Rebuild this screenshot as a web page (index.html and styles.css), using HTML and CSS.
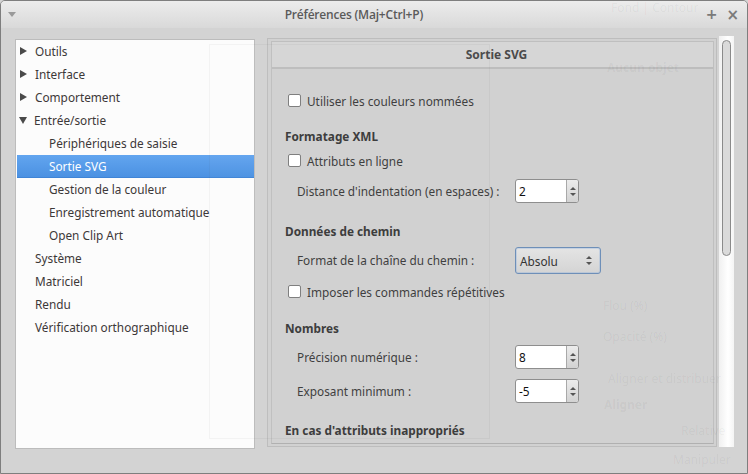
FILE: index.html
```html
<!DOCTYPE html>
<html lang="fr">
<head>
<meta charset="utf-8">
<title>Préférences</title>
<link rel="stylesheet" href="styles.css">
</head>
<body>
<div class="window">
  <div class="titlebar">
    <span class="tb-menu"></span>
    <span class="tb-title">Préférences (Maj+Ctrl+P)</span>
    <span class="tb-btns"><span class="tb-plus">+</span><span class="tb-close">×</span></span>
  </div>
  <div class="main">
    <div class="tree">
      <div class="item top"><span class="arr right"></span>Outils</div>
      <div class="item top"><span class="arr right"></span>Interface</div>
      <div class="item top"><span class="arr right"></span>Comportement</div>
      <div class="item top"><span class="arr down"></span>Entrée/sortie</div>
      <div class="item child">Périphériques de saisie</div>
      <div class="item child sel">Sortie SVG</div>
      <div class="item child">Gestion de la couleur</div>
      <div class="item child">Enregistrement automatique</div>
      <div class="item child">Open Clip Art</div>
      <div class="item top">Système</div>
      <div class="item top">Matriciel</div>
      <div class="item top">Rendu</div>
      <div class="item top">Vérification orthographique</div>
    </div>
    <div class="pane">
      <div class="frame">
        <div class="frame-head">Sortie SVG</div>
        <div class="content">
          <div class="row r-cb1"><span class="cb"></span>Utiliser les couleurs nommées</div>
          <div class="row head r-xml">Formatage XML</div>
          <div class="row r-cb2"><span class="cb"></span>Attributs en ligne</div>
          <div class="row r-dist"><span class="lbl">Distance d'indentation (en espaces) :</span><span class="spin"><span class="spin-val">2</span><span class="spin-btn"><span class="up"></span><span class="dn"></span></span></span></div>
          <div class="row head r-path">Données de chemin</div>
          <div class="row r-fmt"><span class="lbl">Format de la chaîne du chemin :</span><span class="combo"><span>Absolu</span><span class="combo-arr"><span class="up"></span><span class="dn"></span></span></span></div>
          <div class="row r-cb3"><span class="cb"></span>Imposer les commandes répétitives</div>
          <div class="row head r-num">Nombres</div>
          <div class="row r-prec"><span class="lbl">Précision numérique :</span><span class="spin"><span class="spin-val">8</span><span class="spin-btn"><span class="up"></span><span class="dn"></span></span></span></div>
          <div class="row r-exp"><span class="lbl">Exposant minimum :</span><span class="spin"><span class="spin-val">-5</span><span class="spin-btn"><span class="up"></span><span class="dn"></span></span></span></div>
          <div class="row head r-attr">En cas d'attributs inappropriés</div>
        </div>
      </div>
    </div>
    <div class="vscroll"><div class="thumb"></div></div>
  </div>
  <div class="ghost">
    <div class="g-box"></div>
    <span class="g-t g-fond">Fond | Contour</span>
    <span class="g-t g-bold g-aucun">Aucun objet</span>
    <span class="g-t g-flou">Flou (%)</span>
    <span class="g-t g-opa">Opacité (%)</span>
    <span class="g-t g-ali">Aligner et distribuer</span>
    <span class="g-t g-bold g-ali2">Aligner</span>
    <span class="g-t g-rel">Relative</span>
    <span class="g-t g-man">Manipuler</span>
  </div>
</div>
</body>
</html>
```

FILE: styles.css
```css
* { box-sizing: border-box; }
html, body { margin: 0; padding: 0; }
body {
  width: 748px;
  height: 474px;
  overflow: hidden;
  font-family: "Noto Sans", "Open Sans", sans-serif;
  font-size: 12px;
  color: #3a3a3a;
  background: #d4d4d4;
}
.window {
  position: relative;
  width: 748px;
  height: 474px;
  border: 1px solid #7e7e7e;
  border-radius: 5px 5px 0 0;
  background: #d3d3d3;
  overflow: hidden;
}
.titlebar {
  height: 27px;
  display: flex;
  align-items: center;
  background: linear-gradient(#ececec, #d9d9d9);
  position: relative;
}
.tb-menu {
  width: 0; height: 0;
  margin-left: 7px;
  border-left: 4px solid transparent;
  border-right: 4px solid transparent;
  border-top: 5px solid #9a9a9a;
}
.tb-title {
  flex: 1;
  text-align: center;
  font-family: "Open Sans", "Noto Sans", sans-serif;
  font-size: 12px;
  font-weight: 600;
  color: #5a5a5a;
  margin-left: -14px;
  margin-top: -1px;
  letter-spacing: -0.2px;
}
.tb-btns {
  display: flex;
  gap: 9px;
  margin-right: 8px;
  color: #7a7a7a;
  font-family: "DejaVu Sans", sans-serif;
  font-weight: bold;
}
.tb-plus { font-size: 14px; }
.tb-close { font-size: 15px; }

.main {
  display: flex;
  padding: 11px 0 0 14px;
}
.tree {
  width: 240px;
  height: 410px;
  background: #fcfcfc;
  border: 1px solid #bcbcbc;
  font-size: 11.8px;
}
.item {
  height: 23px;
  display: flex;
  align-items: center;
  color: #3c3838;
  white-space: nowrap;
  padding-bottom: 1px;
}
.item.top { padding-left: 19px; }
.item.child { padding-left: 33px; }
.item.sel {
  background: linear-gradient(#62a5ef, #4b91e2);
  color: #ffffff;
  margin-left: 1px;
  padding-left: 32px;
  border-bottom: 1px solid #3f84d6;
}
.arr {
  width: 0; height: 0;
  margin-left: -15px;
  margin-right: 8px;
}
.arr.right {
  border-top: 4.5px solid transparent;
  border-bottom: 4.5px solid transparent;
  border-left: 7px solid #4a4a4a;
}
.arr.down {
  margin-left: -16px;
  margin-right: 7px;
  border-left: 4.5px solid transparent;
  border-right: 4.5px solid transparent;
  border-top: 7px solid #4a4a4a;
}

.pane {
  margin-left: 12px;
  width: 450px;
  height: 409px;
  border: 1px solid #bdbdbd;
  padding: 2px 2px 2px 3px;
  margin-top: -1px;
  background: #d1d1d1;
}
.frame {
  height: 100%;
  border: 1px solid #bfbfbf;
  border-bottom-color: #b0b0b0;
  overflow: hidden;
}
.frame-head {
  height: 27px;
  display: flex;
  align-items: center;
  justify-content: center;
  font-weight: bold;
  font-size: 12px;
  color: #4a4a4a;
  background: #d6d6d6;
  border-bottom: 2px solid #bdbdbd;
  padding-left: 8px;
}
.content {
  padding-left: 13px;
  display: flex;
  flex-direction: column;
}
.row {
  display: flex;
  align-items: center;
  white-space: nowrap;
  color: #3c3c3c;
  font-size: 11.8px;
}
.row.head {
  height: 20px;
  font-weight: bold;
  color: #3a3a3a;
  padding-bottom: 1px;
}
.cb {
  width: 13px;
  height: 13px;
  margin-left: 3px;
  margin-right: 6px;
  border: 1px solid #7d7d7d;
  border-radius: 2px;
  background: #ffffff;
}
.lbl {
  width: 230px;
  padding-left: 12px;
  padding-bottom: 1px;
}
.r-cb1, .r-cb2, .r-cb3 { padding-bottom: 1px; }
.r-cb1 { height: 24px; margin-top: 20px; }
.r-xml { margin-top: 13px; }
.r-cb2 { height: 22px; margin-top: 4px; }
.r-dist { height: 24px; margin-top: 7px; }
.r-path { margin-top: 18px; }
.r-fmt { height: 27px; margin-top: 6px; }
.r-cb3 { height: 22px; margin-top: 7px; }
.r-num { margin-top: 15px; }
.r-prec { height: 24px; margin-top: 7px; }
.r-exp { height: 24px; margin-top: 10px; }
.r-attr { margin-top: 17px; }

.spin {
  display: flex;
  width: 64px;
  height: 24px;
  border: 1px solid #8e8e8e;
  border-radius: 3px;
  background: #ffffff;
  overflow: hidden;
}
.spin-val {
  flex: 1;
  padding-left: 3px;
  display: flex;
  align-items: center;
  color: #111;
}
.spin-btn {
  width: 12px;
  border-left: 1px solid #a9a9a9;
  background: linear-gradient(#ececec, #d2d2d2);
  display: flex;
  flex-direction: column;
  align-items: center;
  justify-content: center;
  gap: 3px;
}
.up, .dn {
  width: 0; height: 0;
  border-left: 3px solid transparent;
  border-right: 3px solid transparent;
}
.up { border-bottom: 3px solid #555; }
.dn { border-top: 3px solid #555; }
.combo {
  display: flex;
  align-items: center;
  justify-content: space-between;
  width: 86px;
  height: 27px;
  padding: 0 8px 0 4px;
  border: 1px solid #6e8fb8;
  border-radius: 3px;
  background: linear-gradient(#e4e4e4, #d4d4d4);
  box-shadow: inset 0 0 0 1px rgba(140, 175, 220, 0.35);
  color: #333;
}
.combo-arr {
  display: flex;
  flex-direction: column;
  gap: 3px;
}

.vscroll {
  width: 15px;
  height: 411px;
  margin-left: 2px;
  margin-top: -3px;
  background: linear-gradient(90deg, #f0f0f0, #ffffff 60%, #f4f4f4);
  padding: 4px 0 0 3px;
}
.thumb {
  width: 9px;
  height: 216px;
  border: 1px solid #8a8a8a;
  border-radius: 5px;
  background: #dadada;
}

.ghost {
  position: absolute;
  inset: 0;
  pointer-events: none;
}
.g-box {
  position: absolute;
  left: 208px; top: 43px;
  width: 281px; height: 395px;
  border: 1px solid rgba(0, 0, 0, 0.035);
  background: rgba(255, 255, 255, 0.02);
}
.g-t {
  position: absolute;
  color: rgba(0, 0, 0, 0.05);
  font-size: 12px;
  white-space: nowrap;
}
.g-bold { font-weight: bold; }
.g-fond { left: 610px; top: -2px; }
.g-aucun { left: 606px; top: 58px; }
.g-flou { left: 602px; top: 296px; }
.g-opa { left: 602px; top: 327px; }
.g-ali { left: 607px; top: 369px; }
.g-ali2 { left: 603px; top: 395px; }
.g-rel { left: 680px; top: 421px; }
.g-man { left: 672px; top: 450px; }
```
